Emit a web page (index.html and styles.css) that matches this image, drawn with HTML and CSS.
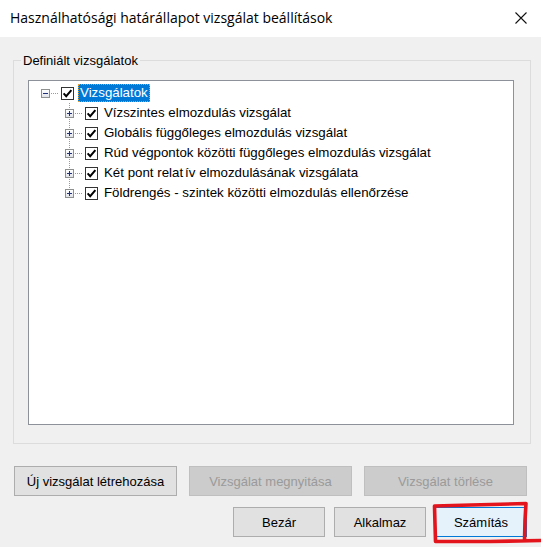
FILE: index.html
```html
<!DOCTYPE html>
<html lang="hu">
<head>
<meta charset="utf-8">
<title>Használhatósági határállapot vizsgálat beállítások</title>
<link rel="stylesheet" href="styles.css">
</head>
<body>
<div class="window">
  <header class="titlebar">
    <span class="title">Használhatósági határállapot vizsgálat beállítások</span>
    <svg class="close" width="12" height="12" viewBox="0 0 12 12"><path d="M0.5 0.5 L11.5 11.5 M11.5 0.5 L0.5 11.5" stroke="#111" stroke-width="1.1" fill="none"/></svg>
  </header>
  <main class="body">
    <fieldset class="group">
      <legend>Definiált vizsgálatok</legend>
      <div class="tree">
        <div class="row root">
          <span class="exp"><span class="glyph-h"></span></span>
          <span class="hline"></span>
          <span class="cb"><svg width="11" height="11" viewBox="0 0 11 11"><path d="M1.6 5.4 L4.2 8.2 L9.4 2.2" stroke="#000" stroke-width="2" fill="none"/></svg></span>
          <span class="label sel">Vizsgálatok</span>
        </div>
        <div class="children">
          <div class="row child">
            <span class="gut"><span class="exp"><span class="glyph-h"></span><span class="glyph-v"></span></span></span>
            <span class="hline"></span>
            <span class="cb"><svg width="11" height="11" viewBox="0 0 11 11"><path d="M1.6 5.4 L4.2 8.2 L9.4 2.2" stroke="#000" stroke-width="2" fill="none"/></svg></span>
            <span class="label">Vízszintes elmozdulás vizsgálat</span>
          </div>
          <div class="row child">
            <span class="gut"><span class="exp"><span class="glyph-h"></span><span class="glyph-v"></span></span></span>
            <span class="hline"></span>
            <span class="cb"><svg width="11" height="11" viewBox="0 0 11 11"><path d="M1.6 5.4 L4.2 8.2 L9.4 2.2" stroke="#000" stroke-width="2" fill="none"/></svg></span>
            <span class="label">Globális függőleges elmozdulás vizsgálat</span>
          </div>
          <div class="row child">
            <span class="gut"><span class="exp"><span class="glyph-h"></span><span class="glyph-v"></span></span></span>
            <span class="hline"></span>
            <span class="cb"><svg width="11" height="11" viewBox="0 0 11 11"><path d="M1.6 5.4 L4.2 8.2 L9.4 2.2" stroke="#000" stroke-width="2" fill="none"/></svg></span>
            <span class="label">Rúd végpontok közötti függőleges elmozdulás vizsgálat</span>
          </div>
          <div class="row child">
            <span class="gut"><span class="exp"><span class="glyph-h"></span><span class="glyph-v"></span></span></span>
            <span class="hline"></span>
            <span class="cb"><svg width="11" height="11" viewBox="0 0 11 11"><path d="M1.6 5.4 L4.2 8.2 L9.4 2.2" stroke="#000" stroke-width="2" fill="none"/></svg></span>
            <span class="label">Két pont relat<span class="kern">í</span>v elmozdulásának vizsgálata</span>
          </div>
          <div class="row child last">
            <span class="gut"><span class="exp"><span class="glyph-h"></span><span class="glyph-v"></span></span></span>
            <span class="hline"></span>
            <span class="cb"><svg width="11" height="11" viewBox="0 0 11 11"><path d="M1.6 5.4 L4.2 8.2 L9.4 2.2" stroke="#000" stroke-width="2" fill="none"/></svg></span>
            <span class="label">Földrengés - szintek közötti elmozdulás ellenőrzése</span>
          </div>
        </div>
      </div>
    </fieldset>
    <div class="actions">
      <button class="btn wide">Új vizsgálat létrehozása</button>
      <button class="btn wide" disabled>Vizsgálat megnyitása</button>
      <button class="btn wide" disabled>Vizsgálat törlése</button>
    </div>
    <div class="footer">
      <button class="btn small">Bezár</button>
      <button class="btn small">Alkalmaz</button>
      <button class="btn small default">Számítás</button>
    </div>
  </main>
</div>
<svg class="annot" width="541" height="547" viewBox="0 0 541 547">
  <path d="M434.5 506 L471 505 L526 503.5 L525 520 L524.5 541 M434.5 506 L435 524 L435.5 541.5 L490 541.5 L541 540.5" stroke="#e3141c" stroke-width="3.6" fill="none" stroke-linecap="round" stroke-linejoin="round"/>
</svg>
</body>
</html>
```

FILE: styles.css
```css
* { box-sizing: border-box; }
html, body { margin: 0; padding: 0; }
body {
  width: 541px;
  height: 547px;
  background: #f0f0f0;
  font-family: "Liberation Sans", Arial, sans-serif;
  font-size: 13px;
  color: #000;
  position: relative;
  overflow: hidden;
}
.window { display: flex; flex-direction: column; }
.titlebar {
  height: 37px;
  background: #fff;
  display: flex;
  align-items: center;
  justify-content: space-between;
  padding: 0 14px 0 10px;
}
.title {
  font-family: "Open Sans", "Noto Sans", sans-serif;
  font-size: 14px;
  color: #000;
  margin-top: -2px;
}
.close { display: block; margin-top: -1px; }
.body {
  display: flex;
  flex-direction: column;
}
.group {
  margin: 16px 10px 0 13px;
  padding: 12px 16px 18px 14px;
  border: 1px solid #dcdcdc;
  min-width: 0;
}
.group legend {
  font-size: 13px;
  line-height: 15px;
  padding: 0 2px;
  margin-left: -7px;
  color: #000;
}
.tree {
  height: 345px;
  background: #fff;
  border: 1px solid #8d9199;
  padding: 2px 0 0 12px;
}
.row {
  height: 20px;
  display: flex;
  align-items: center;
}
.exp {
  width: 9px;
  height: 9px;
  border: 1px solid #8e8f8f;
  background: linear-gradient(#ffffff, #dfe2e8);
  position: relative;
  flex: none;
}
.glyph-h {
  position: absolute;
  left: 1px; top: 3px;
  width: 5px; height: 1px;
  background: #1f2f7a;
}
.glyph-v {
  position: absolute;
  left: 3px; top: 1px;
  width: 1px; height: 5px;
  background: #1f2f7a;
}
.hline {
  width: 8px;
  height: 1px;
  margin: 0 2px 0 1px;
  background: repeating-linear-gradient(to right, #9a9a9a 0 1px, transparent 1px 2px);
  flex: none;
}
.cb {
  width: 13px;
  height: 13px;
  border: 1px solid #333;
  background: #fff;
  display: flex;
  align-items: center;
  justify-content: center;
  flex: none;
}
.cb svg { display: block; }
.label {
  margin-left: 4px;
  padding: 0 2px;
  font-size: 13.3px;
  line-height: 16px;
  white-space: nowrap;
}
.label.sel {
  background: #0078d7;
  color: #fff;
  height: 18px;
  line-height: 16px;
  border: 1px dotted #e8a030;
  padding: 0 1px;
}
.kern { margin-left: 2px; }
.children { padding-left: 24px; }
.gut {
  width: 9px;
  height: 20px;
  display: flex;
  align-items: center;
  flex: none;
  background: repeating-linear-gradient(to bottom, #9a9a9a 0 1px, transparent 1px 2px) 4px 0 / 1px 100% no-repeat;
}
.last .gut { background-size: 1px 50%; }
.actions {
  display: flex;
  justify-content: space-between;
  margin: 22px 14px 0 14px;
}
.footer {
  display: flex;
  justify-content: flex-end;
  gap: 9px;
  margin: 11px 14px 0 14px;
}
.btn {
  height: 30px;
  font-family: "Liberation Sans", Arial, sans-serif;
  font-size: 13px;
  color: #000;
  background: #e1e1e1;
  border: 1px solid #adadad;
  padding: 0;
}
.btn.wide { width: 163px; }
.btn.small { width: 92px; }
.btn:disabled {
  background: #cccccc;
  border-color: #bfbfbf;
  color: #9a9a9a;
}
.btn.default {
  background: #e5f1fb;
  border-color: #0078d7;
}
.annot {
  position: absolute;
  left: 0;
  top: 0;
  pointer-events: none;
}
```
